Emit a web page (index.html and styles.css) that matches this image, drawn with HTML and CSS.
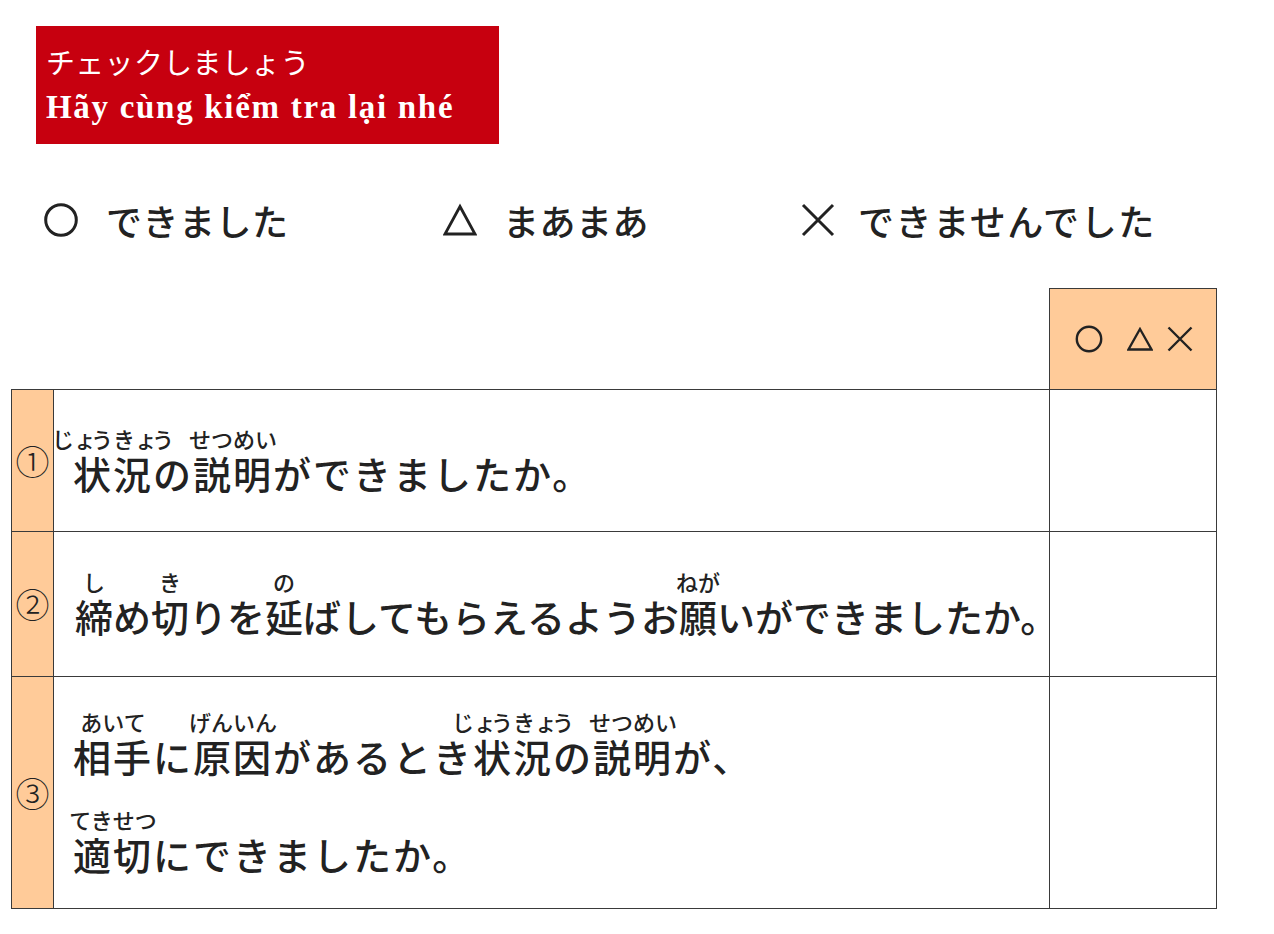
FILE: index.html
```html
<!DOCTYPE html>
<html lang="ja">
<head>
<meta charset="utf-8">
<title>チェックしましょう</title>
<link rel="stylesheet" href="styles.css">
</head>
<body>
<div class="page">
  <div class="title">
    <div class="title-ja">チェックしましょう</div>
    <div class="title-vi">Hãy cùng kiểm tra lại nhé</div>
  </div>

  <div class="legend">
    <div class="legend-item item-1">
      <svg class="sym" width="34" height="34" viewBox="0 0 34 34"><circle cx="17" cy="17" r="15.3" fill="none" stroke="#222" stroke-width="3"/></svg>
      <span>できました</span>
    </div>
    <div class="legend-item item-2">
      <svg class="sym" width="34" height="34" viewBox="0 0 34 34"><polygon points="17,3.5 32,31 2,31" fill="none" stroke="#222" stroke-width="2.8" stroke-linejoin="miter"/></svg>
      <span>まあまあ</span>
    </div>
    <div class="legend-item item-3">
      <svg class="sym" width="34" height="34" viewBox="0 0 34 34"><path d="M2 2 L32 32 M32 2 L2 32" fill="none" stroke="#222" stroke-width="3"/></svg>
      <span>できませんでした</span>
    </div>
  </div>

  <table class="check">
    <colgroup>
      <col class="c-num">
      <col class="c-text">
      <col class="c-mark">
    </colgroup>
    <tr class="r-head">
      <td class="blank" colspan="2"></td>
      <td class="head">
        <div class="marks">
          <svg width="28" height="28" viewBox="0 0 28 28"><circle cx="14" cy="14" r="12.2" fill="none" stroke="#222" stroke-width="2.4"/></svg>
          <svg class="m-tri" width="26" height="24" viewBox="0 0 26 24"><polygon points="13,2 24.5,22.5 1.5,22.5" fill="none" stroke="#222" stroke-width="2.3"/></svg>
          <svg width="26" height="26" viewBox="0 0 26 26"><path d="M1.5 1.5 L24.5 24.5 M24.5 1.5 L1.5 24.5" fill="none" stroke="#222" stroke-width="2.4"/></svg>
        </div>
      </td>
    </tr>
    <tr class="r-1">
      <td class="num">①</td>
      <td class="text">
        <div class="line"><span class="rb">状況<span class="rt">じ<span class="sm">ょ</span>うき<span class="sm">ょ</span>う</span></span>の<span class="rb">説明<span class="rt">せつめい</span></span>ができましたか。</div>
      </td>
      <td class="mark"></td>
    </tr>
    <tr class="r-2">
      <td class="num">②</td>
      <td class="text narrow">
        <div class="line"><span class="rb">締<span class="rt">し</span></span>め<span class="rb">切<span class="rt">き</span></span>りを<span class="rb">延<span class="rt">の</span></span>ばしてもらえるようお<span class="rb">願<span class="rt">ねが</span></span>いができましたか。</div>
      </td>
      <td class="mark"></td>
    </tr>
    <tr class="r-3">
      <td class="num">③</td>
      <td class="text">
        <div class="line"><span class="rb">相手<span class="rt">あいて</span></span>に<span class="rb">原因<span class="rt">げんいん</span></span>があるとき<span class="rb">状況<span class="rt">じ<span class="sm">ょ</span>うき<span class="sm">ょ</span>う</span></span>の<span class="rb">説明<span class="rt">せつめい</span></span>が、</div>
        <div class="line second"><span class="rb">適切<span class="rt">てきせつ</span></span>にできましたか。</div>
      </td>
      <td class="mark"></td>
    </tr>
  </table>
</div>
</body>
</html>
```

FILE: styles.css
```css
html, body {
  margin: 0;
  padding: 0;
  background: #ffffff;
}

body {
  font-family: "Noto Sans CJK JP", "Noto Sans", sans-serif;
  color: #222222;
}

.page {
  width: 1274px;
  min-height: 934px;
  padding-top: 26px;
  box-sizing: border-box;
}

/* Title banner */
.title {
  margin-left: 36px;
  width: 463px;
  height: 118px;
  background: #c7000f;
  color: #ffffff;
  box-sizing: border-box;
  padding: 13px 0 0 10px;
}

.title-ja {
  font-family: "Noto Sans CJK JP", sans-serif;
  font-size: 29px;
  line-height: 44px;
  font-weight: 400;
  letter-spacing: 0.3px;
}

.title-vi {
  font-family: "Liberation Serif", "Times New Roman", serif;
  font-weight: 700;
  font-size: 33px;
  line-height: 48px;
  letter-spacing: 1.7px;
  white-space: nowrap;
}

/* Legend */
.legend {
  margin-top: 56px;
  height: 40px;
  padding-left: 44px;
  display: flex;
  align-items: center;
}

.legend-item {
  display: flex;
  align-items: center;
  gap: 28px;
  font-size: 36px;
  line-height: 40px;
  font-weight: 500;
  letter-spacing: 0.5px;
  white-space: nowrap;
}

.item-1 { width: 399px; }
.item-2 { width: 358px; gap: 26px; }
.item-3 { gap: 23px; letter-spacing: 1.6px; }

.sym {
  flex: none;
  display: block;
}

/* Table */
.check {
  margin-top: 48px;
  margin-left: 11px;
  border-collapse: collapse;
  table-layout: fixed;
  width: 1205px;
}

.c-num { width: 42px; }
.c-text { width: 996px; }
.c-mark { width: 167px; }

.check td {
  border: 1px solid #3a3a3a;
  padding: 0;
}

.check td.blank {
  border: none;
}

.r-head { height: 101px; }
.r-1 { height: 142px; }
.r-2 { height: 145px; }
.r-3 { height: 232px; }

.head {
  background: #ffcb99;
  vertical-align: middle;
}

.marks {
  display: flex;
  align-items: center;
  justify-content: center;
  padding-left: 2px;
}

.marks svg {
  display: block;
}

.marks .m-tri {
  margin-left: 24px;
  margin-right: 14px;
}

.num {
  background: #ffcb99;
  text-align: center;
  vertical-align: middle;
  font-size: 34px;
  font-weight: 300;
  line-height: 40px;
}

.text {
  vertical-align: middle;
  padding-left: 19px !important;
  font-size: 38px;
  font-weight: 500;
  letter-spacing: 2px;
}

.text.narrow {
  padding-left: 21px !important;
  letter-spacing: 0;
}

.line {
  padding-top: 24px;
  line-height: 46px;
  white-space: nowrap;
}

.line.second {
  margin-top: 28px;
}

.rb {
  position: relative;
}

.rt {
  position: absolute;
  left: 50%;
  bottom: calc(100% - 4px);
  transform: translateX(-50%);
  font-size: 22px;
  line-height: 22px;
  font-weight: 500;
  letter-spacing: 0;
  white-space: nowrap;
}

.rt .sm {
  letter-spacing: -5px;
}
```
